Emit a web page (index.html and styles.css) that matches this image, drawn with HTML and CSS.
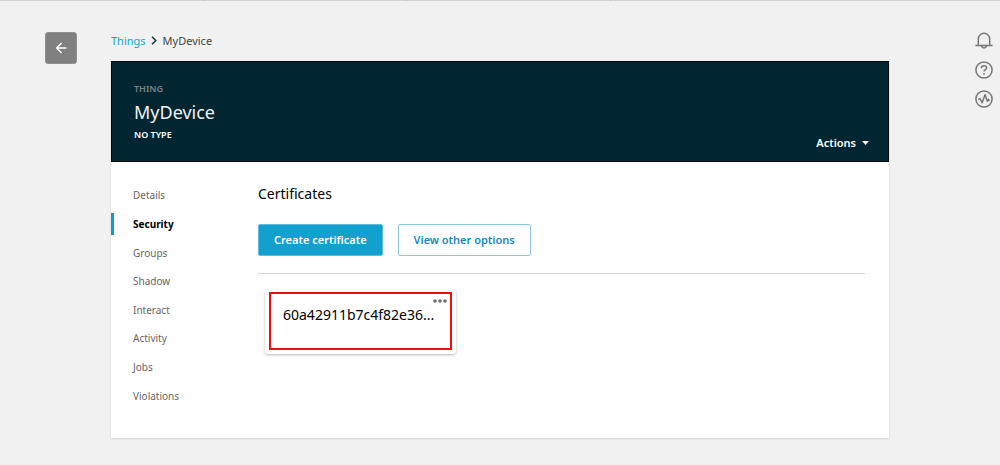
FILE: index.html
```html
<!DOCTYPE html>
<html lang="en">
<head>
<meta charset="utf-8">
<title>MyDevice</title>
<link rel="stylesheet" href="styles.css">
</head>
<body>
<div class="topline"><span></span><span></span><span></span><span></span></div>
<div class="page">
  <button class="back" type="button" aria-label="Back">
    <svg width="12" height="12" viewBox="0 0 12 12" fill="none" stroke="currentColor" stroke-width="1.4"><path d="M6.6 1 1.6 6l5 5M1.6 6h9.8"/></svg>
  </button>
  <main class="main">
    <nav class="crumbs" aria-label="Breadcrumb">
      <a href="#things">Things</a>
      <svg width="6" height="11" viewBox="0 0 6 11" fill="none" stroke="currentColor" stroke-width="1.5"><path d="m1 .7 3.8 3.8L1 8.3"/></svg>
      <span>MyDevice</span>
    </nav>
    <section class="panel">
      <header class="hero">
        <div>
          <p class="kind">THING</p>
          <h1 class="name">MyDevice</h1>
          <p class="type">NO TYPE</p>
        </div>
        <button class="actions" type="button">Actions
          <svg width="7" height="4" viewBox="0 0 7 4" fill="currentColor"><path d="M0 0h7L3.5 4z"/></svg>
        </button>
      </header>
      <div class="body">
        <nav class="tabs" aria-label="Thing sections">
          <a href="#details">Details</a>
          <a class="current" href="#security" aria-current="page">Security</a>
          <a href="#groups">Groups</a>
          <a href="#shadow">Shadow</a>
          <a href="#interact">Interact</a>
          <a href="#activity">Activity</a>
          <a href="#jobs">Jobs</a>
          <a href="#violations">Violations</a>
        </nav>
        <div class="content">
          <h2 class="title">Certificates</h2>
          <div class="buttons">
            <button class="btn primary" type="button">Create certificate</button>
            <button class="btn" type="button">View other options</button>
          </div>
          <div class="card">
            <div class="outline">
              <button class="more" type="button" aria-label="More">
                <svg width="14" height="4" viewBox="0 0 14 4" fill="currentColor"><circle cx="2" cy="2" r="1.8"/><circle cx="7" cy="2" r="1.8"/><circle cx="12" cy="2" r="1.8"/></svg>
              </button>
              <a class="cert" href="#certificate">60a42911b7c4f82e36...</a>
            </div>
          </div>
        </div>
      </div>
    </section>
  </main>
  <aside class="tools">
    <button type="button" aria-label="Notifications">
      <svg width="18" height="18" viewBox="0 0 18 18" fill="none" stroke="currentColor" stroke-width="1.5"><path d="M.3 13.6h17.4M3.3 13.6V7a5.7 5.7 0 0 1 11.4 0v6.6M6.5 14a2.6 2.6 0 0 0 5 0"/></svg>
    </button>
    <button type="button" aria-label="Help">
      <svg width="18" height="18" viewBox="0 0 18 18" fill="none" stroke="currentColor" stroke-width="1.5"><circle cx="9" cy="9" r="8.1"/><path d="M6.4 7.2C6.4 5.6 7.5 4.8 9 4.8s2.6.8 2.6 2.1c0 1.7-2.6 1.8-2.6 3.6M9 12v1.7"/></svg>
    </button>
    <button type="button" aria-label="Activity">
      <svg width="18" height="18" viewBox="0 0 18 18" fill="none" stroke="currentColor" stroke-width="1.5" stroke-linejoin="round"><circle cx="9" cy="9" r="8.1"/><path d="M3.3 9.5 5 8.6l2.2 4.2 2.9-8.2 2.2 6.7 1-2 1.5 1.2"/></svg>
    </button>
  </aside>
</div>
</body>
</html>
```
FILE: styles.css
```css
* { box-sizing: border-box; }
body {
  margin: 0;
  background: #f1f1f1;
  font: 11px/16px "Noto Sans", "Open Sans", sans-serif;
  color: #000;
}
h1, h2, p { margin: 0; }
a { color: inherit; text-decoration: none; }
button {
  margin: 0;
  padding: 0;
  border: 0;
  background: none;
  font: inherit;
  color: inherit;
  cursor: pointer;
}
svg { display: block; }

.topline {
  display: grid;
  grid-template-columns: 204fr 202fr 204fr 390fr;
  height: 1px;
  background: #d2d2d2;
}
.topline span + span { border-left: 1px solid #bdbdbd; }

.page {
  display: flex;
  align-items: flex-start;
  padding: 31px 7px 26px 45px;
}
.back {
  display: grid;
  place-items: center;
  width: 32px;
  height: 32px;
  margin-right: 34px;
  border: 1px solid #8f8f8f;
  border-radius: 3px;
  background: #808080;
  color: #fff;
}
.main { flex: 1; min-width: 0; }
.crumbs {
  display: flex;
  align-items: center;
  gap: 5px;
  height: 29px;
  padding-bottom: 11px;
  color: #444;
}
.crumbs a { color: #10a5cd; }
.crumbs svg { color: #16333f; margin-right: 1px; }

.panel {
  background: #fff;
  box-shadow: 0 1px 2px rgba(0, 0, 0, .12);
}
.hero {
  display: flex;
  justify-content: space-between;
  align-items: flex-end;
  padding: 19px 19px 10px 22px;
  border: 1px solid #000a0e;
  background: #012631;
  color: #fff;
}
.kind { font-size: 9px; color: #7f8488; font-weight: 600; }
.name { font-size: 18px; line-height: 30px; font-weight: 400; color: #f1f1f1; }
.type { font-size: 9px; font-weight: 600; margin-bottom: 8px; }
.actions {
  display: flex;
  align-items: center;
  gap: 6px;
  font-weight: 600;
}

.body { display: flex; padding: 19px 24px 28px 0; }
.tabs {
  display: grid;
  grid-auto-rows: 1fr;
  align-items: center;
  width: 147px;
  height: 229px;
  color: #666;
}
.tabs a {
  padding-left: 19px;
  border-left: 3px solid transparent;
  font-size: 10px;
  line-height: 22px;
}
.tabs .current {
  border-color: #0f9dcb;
  color: #000;
  font-weight: 700;
}
.content { flex: 1; min-width: 0; }
.title {
  font-size: 14px;
  line-height: 26px;
  font-weight: 400;
}
.buttons {
  display: flex;
  gap: 15px;
  padding: 17px 0;
  border-bottom: 1px solid #d8d8d8;
}
.btn {
  height: 32px;
  padding: 0 15px;
  border: 1px solid #8cc6e0;
  border-radius: 2px;
  background: #fff;
  color: #1688bd;
  font-weight: 600;
}
.btn.primary {
  border-color: #5fbbdc;
  background: #12a1cf;
  color: #fff;
}
.card {
  width: 191px;
  margin: 16px 0 0 7px;
  padding: 2px 4px 4px;
  border-radius: 3px;
  background: #fff;
  box-shadow: 0 1px 3px rgba(0, 0, 0, .28);
}
.outline {
  display: flex;
  flex-direction: column;
  height: 58px;
  padding: 5px 3px 0 12px;
  border: 2px solid #f30d0d;
}
.more { align-self: flex-end; color: #6d6d6d; }
.cert { font-size: 14px; line-height: 24px; }

.tools {
  display: flex;
  flex-direction: column;
  gap: 11px;
  margin-left: 86px;
  color: #777;
}
```
